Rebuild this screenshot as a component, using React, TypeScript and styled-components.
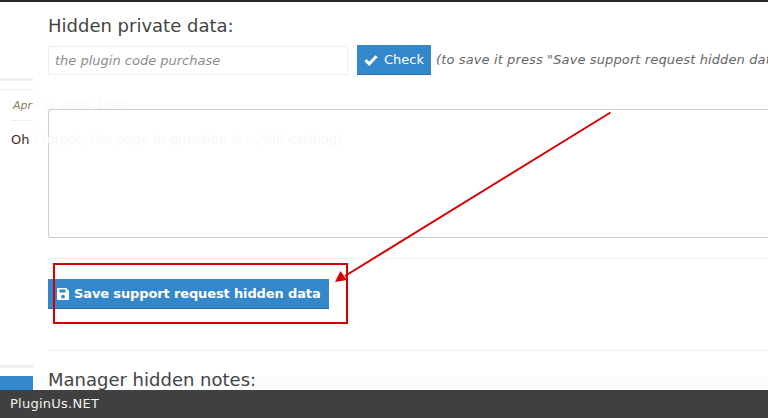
import React from "react";
import styled, { createGlobalStyle } from "styled-components";

const Global = createGlobalStyle`
  html, body { margin: 0; padding: 0; width: 768px; height: 418px; overflow: hidden; background: #fff; }
  * { box-sizing: border-box; }
`;

const Page = styled.div`
  position: relative;
  width: 768px;
  height: 418px;
  overflow: hidden;
  display: flex;
  flex-direction: column;
  font-family: "DejaVu Sans", Verdana, sans-serif;
  background: #fff;
`;
const TopBar = styled.div`
  height: 2px;
  flex: none;
  background: #23282d;
`;
const Body = styled.div`
  flex: 1;
  min-height: 0;
  display: flex;
  overflow: hidden;
`;
const Rail = styled.div`
  width: 33px;
  flex: none;
  display: flex;
  flex-direction: column;
`;
const RailBar = styled.div`
  height: 3px;
  margin-top: 76px;
  background: #eeeeee;
`;
const RailLine = styled.div<{ $gap: number; $inset: number }>`
  height: 1px;
  flex: none;
  margin-top: ${(p) => p.$gap}px;
  margin-left: ${(p) => p.$inset}px;
  background: #eeeeee;
`;
const RailDate = styled.div`
  margin-top: 7px;
  padding-left: 13px;
  height: 17px;
  font-size: 11px;
  line-height: 17px;
  font-style: italic;
  color: #8a7a5c;
  white-space: nowrap;
`;
const RailText = styled.div`
  margin-top: 10px;
  padding-left: 11px;
  height: 17px;
  font-size: 13px;
  line-height: 17px;
  color: #3f2a1f;
  white-space: nowrap;
`;
const RailBarLow = styled.div`
  height: 3px;
  flex: none;
  margin-top: 217px;
  background: #eeeeee;
`;
const RailBlue = styled.div`
  height: 14px;
  flex: none;
  margin-top: 8px;
  background: #3388cc;
`;
const Main = styled.div`
  flex: 1;
  min-width: 0;
  padding: 14px 0 0 15px;
  position: relative;
  background: linear-gradient(to bottom, #ffffff 374px, #fbfcfe 374px);
`;
const Heading = styled.h3`
  margin: 0;
  font-size: 18px;
  line-height: 20px;
  font-weight: 400;
  color: #444444;
  white-space: nowrap;
`;
const CheckRow = styled.div`
  display: flex;
  align-items: flex-start;
  margin-top: 9px;
  white-space: nowrap;
`;
const CodeInput = styled.div`
  width: 300px;
  flex: none;
  height: 29px;
  margin-top: 1px;
  padding-left: 6px;
  border: 1px solid #eeeeee;
  font-size: 13px;
  line-height: 27px;
  font-style: italic;
  color: #8c8c8c;
`;
const Button = styled.div`
  display: inline-flex;
  align-items: center;
  background: #3388cc;
  border-bottom: 1px solid #2a6fa8;
  color: #fff;
  white-space: nowrap;
`;
const CheckButton = styled(Button)`
  width: 74px;
  height: 30px;
  flex: none;
  margin-left: 9px;
  padding-left: 7px;
  gap: 6px;
  font-size: 13px;
`;
const Hint = styled.div`
  margin-left: 5px;
  flex: none;
  font-size: 13px;
  line-height: 29px;
  font-style: italic;
  letter-spacing: 0.12px;
  color: #666666;
`;
const TextBox = styled.div`
  width: 740px;
  height: 129px;
  margin-top: 34px;
  border: 1px solid #cccccc;
  border-right: 0;
  border-radius: 3px 0 0 3px;
`;
const Rule = styled.div<{ $top: number }>`
  height: 1px;
  margin-top: ${(p) => p.$top}px;
  background: #eeeeee;
`;
const SaveButton = styled(Button)`
  width: 281px;
  height: 30px;
  margin-top: 20px;
  padding-left: 9px;
  gap: 5px;
  font-size: 13px;
  font-weight: 700;
  letter-spacing: -0.13px;
`;
const LowHeading = styled(Heading)`
  margin-top: 19px;
`;
const Ghost = styled.div<{ $x: number; $y: number; $size: number; $italic?: boolean }>`
  position: absolute;
  left: ${(p) => p.$x}px;
  top: ${(p) => p.$y}px;
  font-size: ${(p) => p.$size}px;
  font-style: ${(p) => (p.$italic ? "italic" : "normal")};
  line-height: 17px;
  color: #f8f8f8;
  white-space: nowrap;
`;
const Footer = styled.div`
  height: 28px;
  flex: none;
  padding-left: 10px;
  background: #404040;
  color: #f2f2f2;
  font-size: 13px;
  line-height: 28px;
  letter-spacing: 0.25px;
`;
const Annotation = styled.svg`
  position: absolute;
  left: 0;
  top: 0;
  pointer-events: none;
`;

const CheckIcon = () => (
  <svg width="14" height="12" viewBox="0 0 14 12">
    <path d="M1.5 6.2 5.2 9.8 12.5 2.2" fill="none" stroke="#fff" strokeWidth="3" />
  </svg>
);
const SaveIcon = () => (
  <svg width="12" height="12" viewBox="0 0 12 12">
    <path
      fillRule="evenodd"
      fill="#fff"
      d="M1 0h8.2L12 2.8V11a1 1 0 0 1-1 1H1a1 1 0 0 1-1-1V1a1 1 0 0 1 1-1ZM2.5 1.5v3h6v-3ZM6 6.8a1.9 1.9 0 1 0 0 3.8 1.9 1.9 0 0 0 0-3.8Z"
    />
  </svg>
);

export default function App() {
  return (
    <Page>
      <Global />
      <TopBar />
      <Body>
        <Rail>
          <RailBar />
          <RailLine $gap={8} $inset={0} />
          <RailDate>Apr</RailDate>
          <RailLine $gap={6} $inset={11} />
          <RailText>Oh</RailText>
          <RailBarLow />
          <RailBlue />
        </Rail>
        <Main>
          <Heading>Hidden private data:</Heading>
          <CheckRow>
            <CodeInput>the plugin code purchase</CodeInput>
            <CheckButton>
              <CheckIcon />
              Check
            </CheckButton>
            <Hint>(to save it press "Save support request hidden data" button)</Hint>
          </CheckRow>
          <TextBox />
          <Rule $top={20} />
          <SaveButton>
            <SaveIcon />
            Save support request hidden data
          </SaveButton>
          <Rule $top={41} />
          <LowHeading>Manager hidden notes:</LowHeading>
          <Ghost $x={0} $y={95} $size={10.6} $italic>
            il 15, 2020, 12:46
          </Ghost>
          <Ghost $x={1} $y={129} $size={13.25}>
            I forgot, the page in question is .../full-catalog/
          </Ghost>
        </Main>
      </Body>
      <Footer>PluginUs.NET</Footer>
      <Annotation width="768" height="418" viewBox="0 0 768 418">
        <rect x="54" y="264" width="293" height="59" fill="none" stroke="#d40000" strokeWidth="2" />
        <line x1="610.5" y1="112.5" x2="345" y2="276" stroke="#d40000" strokeWidth="2" />
        <path d="M335 282 340.5 271 347 280Z" fill="#d40000" />
      </Annotation>
    </Page>
  );
}
